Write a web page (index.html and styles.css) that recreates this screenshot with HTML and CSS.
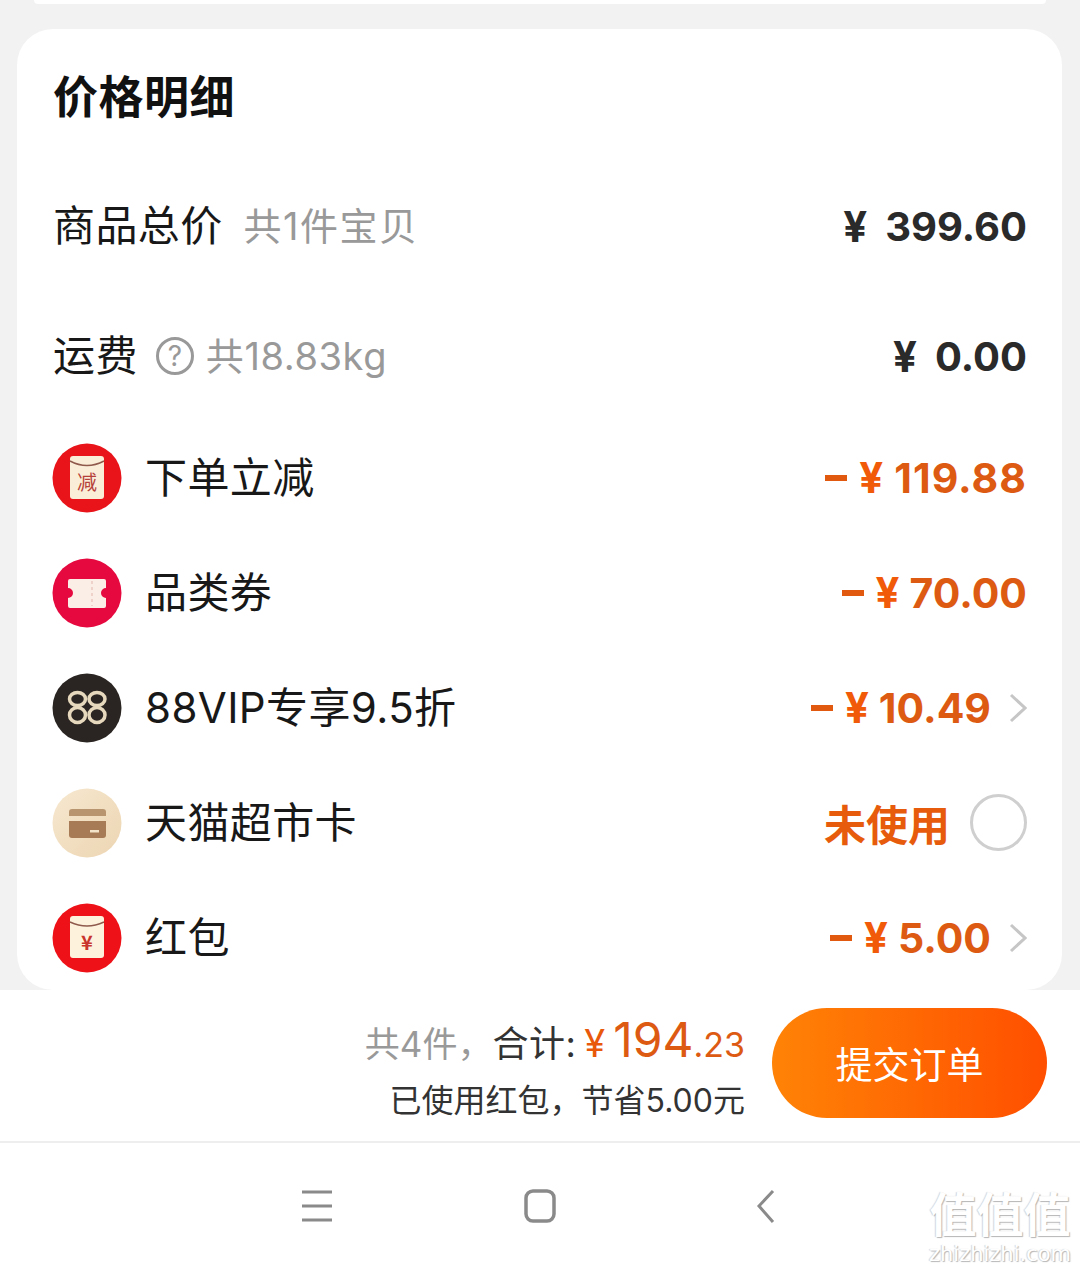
FILE: index.html
```html
<!DOCTYPE html>
<html lang="zh-CN">
<head>
    <meta charset="UTF-8">
    <meta name="viewport" content="width=device-width, initial-scale=1.0">
    <title>价格明细</title>
    <link rel="stylesheet" href="styles.css">
</head>
<body>
    <div class="prev-card"></div>

    <div class="card">
        <h2 class="card-title">价格明细</h2>

        <div class="row row-plain">
            <div class="row-left">
                <span class="label">商品总价</span>
                <span class="note note-wide">共1件宝贝</span>
            </div>
            <div class="price"><span class="yen">¥</span>399.60</div>
        </div>

        <div class="row row-plain row-freight">
            <div class="row-left">
                <span class="label">运费</span>
                <span class="help">?</span>
                <span class="note">共18.83kg</span>
            </div>
            <div class="price"><span class="yen">¥</span>0.00</div>
        </div>

        <div class="row">
            <div class="row-left">
                <svg class="icon" viewBox="0 0 70 70">
                    <circle cx="35" cy="35" r="34.5" fill="#e8141a"/>
                    <rect x="18" y="13" width="34" height="43" rx="3" fill="#fbeed8"/>
                    <path d="M18 18 Q35 27 52 18" fill="none" stroke="#8f5a4c" stroke-width="1.5"/>
                    <text x="35" y="47" class="icon-text" font-size="20" fill="#b5413a">减</text>
                </svg>
                <span class="label">下单立减</span>
            </div>
            <div class="price discount discount-wide"><span class="minus"></span><span class="yen">¥</span>119.88</div>
        </div>

        <div class="row">
            <div class="row-left">
                <svg class="icon" viewBox="0 0 70 70">
                    <circle cx="35" cy="35" r="34.5" fill="#e5093f"/>
                    <path d="M18 21 H52 a2 2 0 0 1 2 2 V30 a5 5 0 0 0 0 10 V48 a2 2 0 0 1 -2 2 H18 a2 2 0 0 1 -2 -2 V40 a5 5 0 0 0 0 -10 V23 a2 2 0 0 1 2 -2 Z" fill="#fbeee6"/>
                    <path d="M40 23 V48" stroke="#ecc9c0" stroke-width="1.5" stroke-dasharray="3 3"/>
                </svg>
                <span class="label">品类券</span>
            </div>
            <div class="price discount"><span class="minus"></span><span class="yen">¥</span>70.00</div>
        </div>

        <div class="row">
            <div class="row-left">
                <svg class="icon" viewBox="0 0 70 70">
                    <circle cx="35" cy="35" r="34.5" fill="#2a2522"/>
                    <g fill="none" stroke="#e6d8bc" stroke-width="3.5">
                        <ellipse cx="25.5" cy="26" rx="8" ry="6.5"/>
                        <ellipse cx="25.5" cy="42" rx="8" ry="7.5"/>
                        <ellipse cx="45" cy="26" rx="8" ry="6.5"/>
                        <ellipse cx="45" cy="42" rx="8" ry="7.5"/>
                    </g>
                </svg>
                <span class="label">88VIP专享9.5折</span>
            </div>
            <div class="price discount">
                <span class="minus"></span><span class="yen">¥</span>10.49
                <svg class="chevron" viewBox="0 0 18 30"><path d="M2 2 L16 15 L2 28" fill="none" stroke="#c6c6c6" stroke-width="3"/></svg>
            </div>
        </div>

        <div class="row">
            <div class="row-left">
                <svg class="icon" viewBox="0 0 70 70">
                    <defs>
                        <linearGradient id="goldBg" x1="0" y1="0" x2="1" y2="1">
                            <stop offset="0" stop-color="#f7e8d0"/>
                            <stop offset="1" stop-color="#ecd5b2"/>
                        </linearGradient>
                    </defs>
                    <circle cx="35" cy="35" r="34.500" fill="url(#goldBg)"/>
                    <path d="M17 28 V24 a3 3 0 0 1 3 -3 H51 a3 3 0 0 1 3 3 V28 Z" fill="#b8956f"/>
                    <path d="M17 33 H54 V47 a3 3 0 0 1 -3 3 H20 a3 3 0 0 1 -3 -3 Z" fill="#a77b55"/>
                    <rect x="38" y="42" width="9" height="2.500" fill="#f3e3c8"/>
                </svg>
                <span class="label">天猫超市卡</span>
            </div>
            <div class="row-right">
                <span class="unused">未使用</span>
                <span class="radio"></span>
            </div>
        </div>

        <div class="row">
            <div class="row-left">
                <svg class="icon" viewBox="0 0 70 70">
                    <circle cx="35" cy="35" r="34.5" fill="#ee1218"/>
                    <rect x="18" y="13" width="34" height="42" rx="3" fill="#fdf3dd"/>
                    <path d="M18 19 Q35 27 52 19" fill="none" stroke="#8f5a4c" stroke-width="1.5"/>
                    <text x="35" y="47" class="icon-text" font-size="20" font-weight="700" fill="#c9352c">¥</text>
                </svg>
                <span class="label">红包</span>
            </div>
            <div class="price discount">
                <span class="minus"></span><span class="yen">¥</span>5.00
                <svg class="chevron" viewBox="0 0 18 30"><path d="M2 2 L16 15 L2 28" fill="none" stroke="#c6c6c6" stroke-width="3"/></svg>
            </div>
        </div>
    </div>

    <div class="footer">
        <div class="summary">
            <div class="total-line">
                <span class="count">共4件，</span><span class="total-label">合计:</span><span class="total-yen">¥</span><span class="total-int">194</span><span class="total-dec">.23</span>
            </div>
            <div class="saved">已使用红包，节省5.00元</div>
        </div>
        <button class="submit">提交订单</button>
    </div>

    <div class="navbar">
        <svg class="nav-icon" viewBox="0 0 32 34">
            <path d="M1 3 H31 M1 17 H31 M1 31 H31" stroke="#8a8a8a" stroke-width="3" fill="none"/>
        </svg>
        <svg class="nav-icon" viewBox="0 0 32 34">
            <rect x="2" y="2" width="28" height="30" rx="7" stroke="#8a8a8a" stroke-width="3.5" fill="none"/>
        </svg>
        <svg class="nav-icon" viewBox="0 0 32 34">
            <path d="M26 2 L12 17 L26 33" stroke="#8a8a8a" stroke-width="3" fill="none"/>
        </svg>
    </div>

    <div class="watermark">
        <div class="wm-mark">值值值</div>
        <div class="wm-url">zhizhizhi.com</div>
    </div>
</body>
</html>
```

FILE: styles.css
```css
* {
    box-sizing: border-box;
}
html, body {
    margin: 0;
    padding: 0;
}
body {
    position: relative;
    width: 1080px;
    height: 1271px;
    overflow: hidden;
    background-color: #f2f2f2;
    font-family: Inter, "Noto Sans CJK SC", sans-serif;
    color: #1a1a1a;
}
.prev-card {
    height: 4px;
    margin: 0 34px;
    background-color: white;
    border-radius: 0 0 14px 14px;
}
.card {
    height: 961px;
    margin: 25px 18px 0 17px;
    padding: 0 35px 0 36px;
    background-color: white;
    border-radius: 36px;
}
.card-title {
    margin: 0;
    height: 135px;
    padding-top: 39px;
    font-size: 45px;
    line-height: 60px;
    font-weight: 700;
    letter-spacing: 0.5px;
    color: #111;
}
.row {
    display: flex;
    justify-content: space-between;
    align-items: center;
    height: 115px;
}
.row-plain {
    height: 124px;
}
.row-freight {
    height: 132px;
    padding-top: 4px;
}
.row-left, .row-right {
    display: flex;
    align-items: center;
}
.label {
    font-size: 42px;
    line-height: 56px;
    letter-spacing: 0.4px;
    color: #181818;
}
.note {
    font-size: 38px;
    color: #999;
    margin-left: 12px;
    margin-bottom: 6px;
    letter-spacing: 0.6px;
}
.note-wide {
    margin-left: 21px;
    letter-spacing: 1.5px;
}
.help {
    width: 38px;
    height: 38px;
    margin-left: 18px;
    border: 3px solid #999;
    border-radius: 50%;
    font-size: 28px;
    line-height: 32px;
    text-align: center;
    color: #999;
}
.icon {
    width: 70px;
    height: 70px;
    margin-left: -1px;
    margin-right: 23px;
    flex-shrink: 0;
}
.icon-text {
    text-anchor: middle;
    font-family: "Noto Sans CJK SC", sans-serif;
}
.price {
    display: flex;
    align-items: center;
    font-size: 40px;
    font-weight: 700;
    color: #2a2a2a;
}
.yen {
    margin-right: 18px;
    font-size: 42px;
}
.discount {
    font-size: 41px;
    color: #dd5a12;
}
.discount-wide {
    letter-spacing: 1px;
}
.discount .yen {
    color: #f05a08;
    margin-right: 10px;
}
.minus {
    width: 22px;
    height: 6px;
    margin-right: 12px;
    background-color: #e0590f;
}
.chevron {
    width: 18px;
    height: 30px;
    margin-left: 18px;
}
.unused {
    font-size: 42px;
    font-weight: 700;
    color: #e65c0c;
}
.radio {
    width: 57px;
    height: 57px;
    margin-left: 20px;
    border: 3px solid #cfcfcf;
    border-radius: 50%;
}
.footer {
    display: flex;
    justify-content: flex-end;
    align-items: center;
    height: 153px;
    padding-right: 33px;
    padding-bottom: 5px;
    background-color: white;
    border-bottom: 2px solid #eeeeee;
}
.summary {
    text-align: right;
    margin-top: 10px;
    margin-right: 27px;
}
.total-line {
    display: flex;
    align-items: baseline;
    justify-content: flex-end;
    line-height: 56px;
}
.count {
    font-size: 35px;
    color: #999;
}
.total-label {
    font-size: 36px;
    letter-spacing: 0.5px;
    color: #333;
}
.total-yen {
    margin-left: 8px;
    margin-right: 8px;
    font-size: 38px;
    color: #e9590c;
}
.total-int {
    font-size: 48px;
    color: #dd5a12;
}
.total-dec {
    font-size: 34px;
    color: #dd5a12;
}
.saved {
    margin-top: 4px;
    font-size: 32px;
    line-height: 48px;
    color: #333;
}
.submit {
    width: 275px;
    height: 110px;
    border: none;
    border-radius: 55px;
    background: linear-gradient(90deg, #ff8306, #ff4f00);
    color: #fff;
    font-family: inherit;
    font-size: 37px;
}
.navbar {
    display: flex;
    justify-content: center;
    gap: 191px;
    padding-top: 46px;
    background-color: white;
    height: 128px;
}
.nav-icon {
    width: 32px;
    height: 34px;
}
.watermark {
    position: absolute;
    right: 9px;
    bottom: 6px;
    width: 142px;
    text-align: center;
}
.wm-mark {
    font-size: 47px;
    line-height: 56px;
    font-weight: 700;
    color: white;
    text-shadow: 1px 1px 1px #b5b5b5, -1px 0 1px #d5d5d5;
}
.wm-url {
    font-family: "DejaVu Sans", sans-serif;
    font-size: 21px;
    line-height: 22px;
    color: white;
    text-shadow: 1px 1px 1px #b5b5b5, -1px 0 1px #d5d5d5;
}
```
